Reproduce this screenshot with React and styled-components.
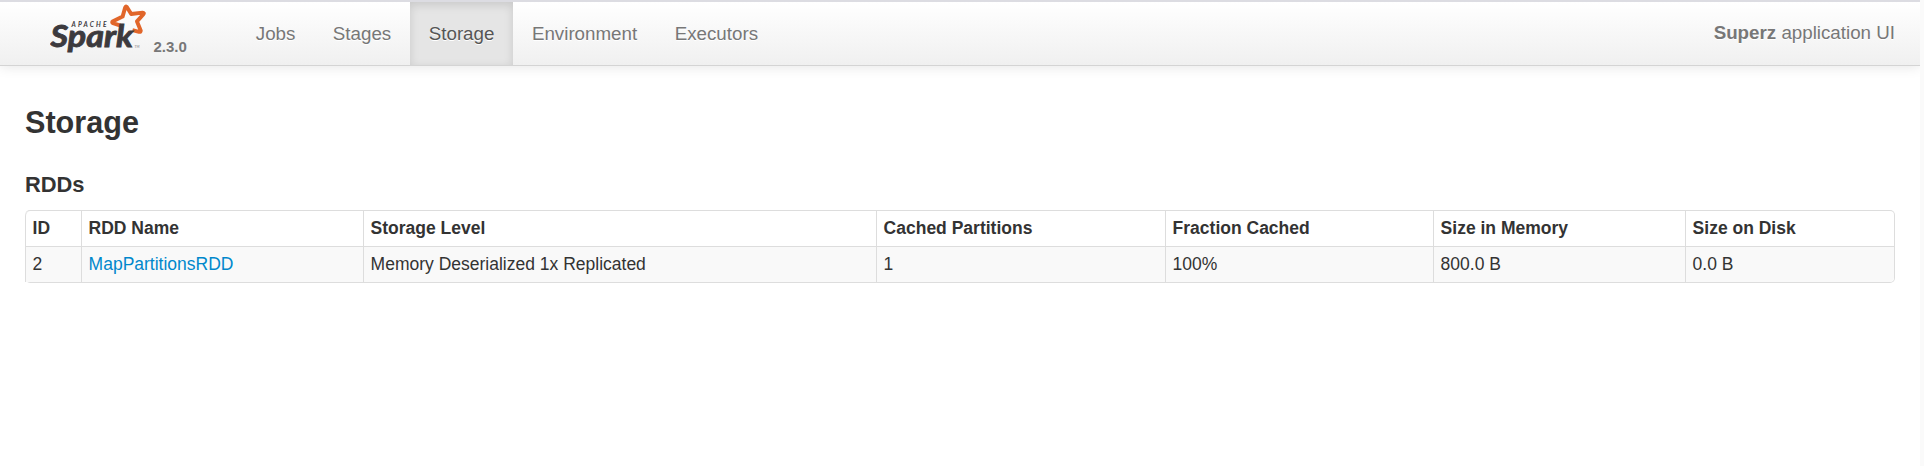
import React from "react";
import styled, { createGlobalStyle } from "styled-components";

const GlobalStyle = createGlobalStyle`
  * { box-sizing: border-box; }
  html, body { margin: 0; background: #fff; }
  body {
    font-family: "Liberation Sans", Arial, sans-serif;
    font-size: 17.5px;
    line-height: 25px;
    color: #333;
    overflow: hidden;
  }
`;

const Shell = styled.div`
  display: grid;
  grid-template-columns: minmax(0, 1fr) 4px;
  height: 466px;
`;

const Page = styled.div`
  background: #fff;
`;

const ScrollTrack = styled.div`
  position: relative;
  background: #fafafa;
`;

const Navbar = styled.header`
  display: flex;
  align-items: stretch;
  height: 66px;
  border-top: 2px solid #dcdce2;
  border-bottom: 1px solid #d4d4d4;
  padding: 0 25px 0 50px;
  background: linear-gradient(to bottom, #ffffff, #f0f0f0);
  box-shadow: 0 1px 12px rgba(0, 0, 0, 0.1);
  color: #777;
  font-size: 18.75px;
`;

const Brand = styled.a`
  display: flex;
  width: 187px;
`;

const Logo = styled.svg`
  display: block;
  width: 96px;
  height: 58px;
`;

const Version = styled.span`
  padding: 35px 0 0 7.4px;
  font-size: 15px;
  line-height: 20px;
  font-weight: bold;
`;

const Nav = styled.nav`
  display: flex;
`;

const NavLink = styled.a`
  padding: 19px 18.75px 0;
  line-height: 25px;
  color: ${(p) => (p.$active ? "#555" : "#777")};
  background: ${(p) => (p.$active ? "#e5e5e5" : "transparent")};
  box-shadow: ${(p) => (p.$active ? "inset 0 3px 10px rgba(0, 0, 0, 0.125)" : "none")};
  text-shadow: 0 1px 0 #fff;
`;

const AppName = styled.p`
  margin: 0 0 0 auto;
  padding-top: 18px;
  line-height: 25px;
  text-shadow: 0 1px 0 #fff;
`;

const Content = styled.main`
  padding: 31px 25px 0;
`;

const Title = styled.h3`
  margin: 0;
  font-size: 30.625px;
  line-height: 50px;
`;

const Subtitle = styled.h4`
  margin: 25px 0 13px;
  font-size: 21.875px;
  line-height: 25px;
`;

const Table = styled.table`
  width: 1870px;
  table-layout: fixed;
  border-collapse: separate;
  border-spacing: 0;
  border: 1px solid #ddd;
  border-left: 0;
  border-radius: 5px;
`;

const Cell = styled.td`
  height: 36px;
  padding: 0 6px 0 6.6px;
  text-align: left;
  line-height: 25px;
  border-left: 1px solid #ddd;
  &:first-child { border-radius: ${(p) => (p.$head ? "5px 0 0 0" : "0")}; }
  &:last-child { border-radius: ${(p) => (p.$head ? "0 5px 0 0" : "0 0 5px 0")}; }
`;

const HeadCell = styled(Cell)`
  height: 35px;
  font-weight: bold;
`;

const BodyCell = styled(Cell)`
  background: #f9f9f9;
  border-top: 1px solid #ddd;
`;

const RddLink = styled.a`
  color: #0088cc;
`;

const columns = [
  { label: "ID", width: 56 },
  { label: "RDD Name", width: 282 },
  { label: "Storage Level", width: 513 },
  { label: "Cached Partitions", width: 289 },
  { label: "Fraction Cached", width: 268 },
  { label: "Size in Memory", width: 252 },
  { label: "Size on Disk", width: 209 },
];

const rdds = [
  ["2", "MapPartitionsRDD", "Memory Deserialized 1x Replicated", "1", "100%", "800.0 B", "0.0 B"],
];

const tabs = ["Jobs", "Stages", "Storage", "Environment", "Executors"];

function SparkLogo() {
  return (
    <Logo viewBox="50 2 96 58" role="img" aria-label="Apache Spark">
      <path
        d="M120.5 25.6 L113 23.2 Q111.3 22.3 113 21.2 L122.6 16.6 L125.2 7.4 Q125.9 5.6 127 7.2 L131.2 14 L142.6 12.6 Q144.6 12.7 143.4 14.2 L137 21.4 L140.7 30.4 Q141 32.2 139 31.8 L132.5 30.2"
        fill="none"
        stroke="#e1662a"
        strokeWidth="3.9"
        strokeLinejoin="round"
      />
      <text x="71.5" y="26.8" fontFamily="Lato, sans-serif" fontSize="6.6" fontWeight="700" fontStyle="italic" fill="#3c3a3e" textLength="35">APACHE</text>
      <text x="50.6" y="47.4" fontFamily="Lato, sans-serif" fontSize="31" fontWeight="700" fontStyle="italic" fill="#3c3a3e" stroke="#3c3a3e" strokeWidth="0.9" textLength="82.5" lengthAdjust="spacingAndGlyphs">Spark</text>
      <text x="134.5" y="47.5" fontFamily="Lato, sans-serif" fontSize="3.2" fill="#77757a">TM</text>
    </Logo>
  );
}

export default function App() {
  return (
    <>
      <GlobalStyle />
      <Shell>
        <Page>
          <Navbar>
            <Brand>
              <SparkLogo />
              <Version>2.3.0</Version>
            </Brand>
            <Nav>
              {tabs.map((tab) => (
                <NavLink key={tab} $active={tab === "Storage"}>{tab}</NavLink>
              ))}
            </Nav>
            <AppName><strong>Superz</strong> application UI</AppName>
          </Navbar>
          <Content>
            <Title>Storage</Title>
            <Subtitle>RDDs</Subtitle>
            <Table>
              <colgroup>
                {columns.map((c) => <col key={c.label} width={c.width} />)}
              </colgroup>
              <thead>
                <tr>
                  {columns.map((c) => <HeadCell as="th" $head key={c.label}>{c.label}</HeadCell>)}
                </tr>
              </thead>
              <tbody>
                {rdds.map((row) => (
                  <tr key={row[0]}>
                    {row.map((value, i) => (
                      <BodyCell key={columns[i].label}>
                        {i === 1 ? <RddLink>{value}</RddLink> : value}
                      </BodyCell>
                    ))}
                  </tr>
                ))}
              </tbody>
            </Table>
          </Content>
        </Page>
        <ScrollTrack />
      </Shell>
    </>
  );
}
